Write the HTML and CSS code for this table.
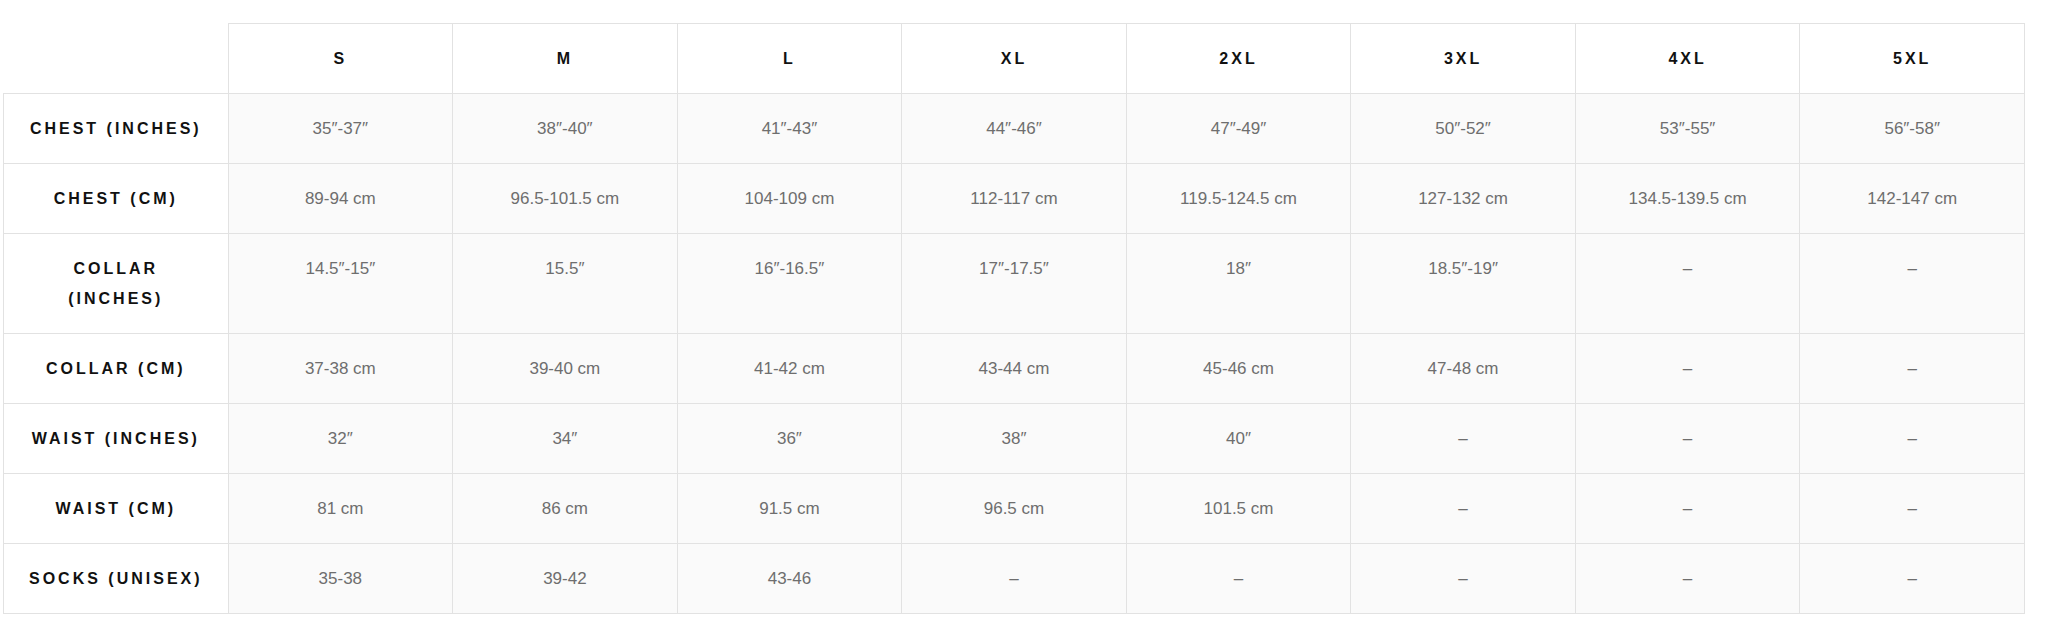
FILE: index.html
```html
<!DOCTYPE html>
<html lang="en">
<head>
<meta charset="utf-8">
<title>Size Chart</title>
<link rel="stylesheet" href="styles.css">
</head>
<body>
<div class="page">
<table class="size-chart">
  <thead>
    <tr>
      <th class="corner"></th>
      <th>S</th><th>M</th><th>L</th><th>XL</th><th>2XL</th><th>3XL</th><th>4XL</th><th>5XL</th>
    </tr>
  </thead>
  <tbody>
    <tr>
      <th>CHEST (INCHES)</th>
      <td>35″-37″</td><td>38″-40″</td><td>41″-43″</td><td>44″-46″</td><td>47″-49″</td><td>50″-52″</td><td>53″-55″</td><td>56″-58″</td>
    </tr>
    <tr>
      <th>CHEST (CM)</th>
      <td>89-94 cm</td><td>96.5-101.5 cm</td><td>104-109 cm</td><td>112-117 cm</td><td>119.5-124.5 cm</td><td>127-132 cm</td><td>134.5-139.5 cm</td><td>142-147 cm</td>
    </tr>
    <tr>
      <th>COLLAR (INCHES)</th>
      <td>14.5″-15″</td><td>15.5″</td><td>16″-16.5″</td><td>17″-17.5″</td><td>18″</td><td>18.5″-19″</td><td>–</td><td>–</td>
    </tr>
    <tr>
      <th>COLLAR (CM)</th>
      <td>37-38 cm</td><td>39-40 cm</td><td>41-42 cm</td><td>43-44 cm</td><td>45-46 cm</td><td>47-48 cm</td><td>–</td><td>–</td>
    </tr>
    <tr>
      <th>WAIST (INCHES)</th>
      <td>32″</td><td>34″</td><td>36″</td><td>38″</td><td>40″</td><td>–</td><td>–</td><td>–</td>
    </tr>
    <tr>
      <th>WAIST (CM)</th>
      <td>81 cm</td><td>86 cm</td><td>91.5 cm</td><td>96.5 cm</td><td>101.5 cm</td><td>–</td><td>–</td><td>–</td>
    </tr>
    <tr>
      <th>SOCKS (UNISEX)</th>
      <td>35-38</td><td>39-42</td><td>43-46</td><td>–</td><td>–</td><td>–</td><td>–</td><td>–</td>
    </tr>
  </tbody>
</table>
</div>
</body>
</html>
```
FILE: styles.css
```css
html, body {
  margin: 0;
  padding: 0;
  background: #ffffff;
}

.page {
  padding: 23px 0 0 3px;
}

.size-chart {
  width: 2022px;
  table-layout: fixed;
  border-collapse: collapse;
  font-family: "Liberation Sans", Arial, sans-serif;
}

.size-chart th,
.size-chart td {
  border: 1px solid #e2e2e2;
  padding: 20px 20px 19px;
  line-height: 30px;
  text-align: center;
  vertical-align: top;
}

.size-chart th {
  font-size: 16px;
  font-weight: bold;
  letter-spacing: 3px;
  color: #111111;
  background: #ffffff;
}

.size-chart th.corner {
  border-top: none;
  border-left: none;
}

.size-chart td {
  font-size: 17px;
  color: #6e6e6e;
  background: #fafafa;
}
```
